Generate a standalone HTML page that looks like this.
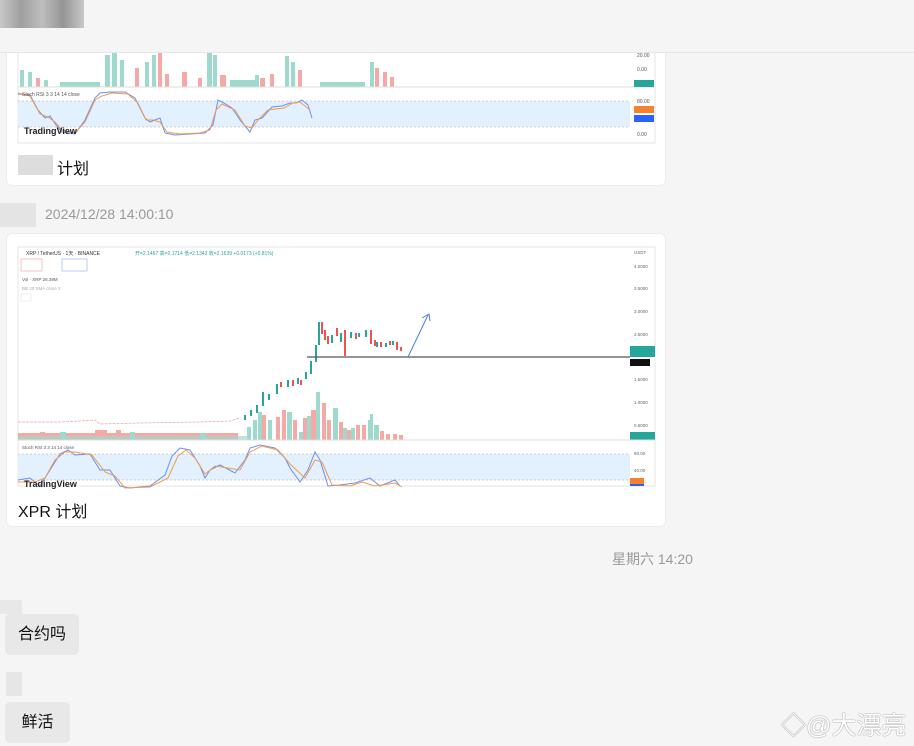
<!DOCTYPE html>
<html><head><meta charset="utf-8"><style>
body{margin:0;width:914px;height:746px;background:#f5f5f5;font-family:"Liberation Sans","Noto Sans CJK SC",sans-serif;position:relative;overflow:hidden}
.abs{position:absolute}
.card{position:absolute;background:#fff;border-radius:6px;border:1px solid #ececec}
.txt{position:absolute;font-size:16px;color:#111}
.bub{position:absolute;background:#e8e8e8;border-radius:5px;font-size:16px;color:#111;line-height:41px;text-align:center}
.blur{position:absolute;background:#ddd}
</style></head><body>
<div class="card" style="left:6px;top:20px;width:658px;height:164px"></div>
<svg class="abs" style="left:0;top:0" width="914" height="746">
<rect x="18" y="40" width="637" height="103" fill="#fff" stroke="#e5e5e5"/>
<g fill="#9fd8cc">
<rect x="20" y="70" width="4" height="17"/><rect x="28" y="72" width="4" height="15"/><rect x="44" y="80" width="4" height="7"/><rect x="105" y="55" width="5" height="32"/><rect x="112" y="50" width="5" height="37"/><rect x="120" y="60" width="4" height="27"/><rect x="145" y="62" width="4" height="25"/><rect x="152" y="55" width="4" height="32"/><rect x="207" y="52" width="5" height="35"/><rect x="213" y="55" width="4" height="32"/><rect x="255" y="75" width="4" height="12"/><rect x="285" y="56" width="4" height="31"/><rect x="291" y="62" width="4" height="25"/><rect x="370" y="62" width="4" height="25"/>
<rect x="60" y="82" width="40" height="5"/><rect x="230" y="80" width="25" height="7"/><rect x="320" y="82" width="45" height="5"/>
</g>
<g fill="#f4a9a4">
<rect x="36" y="78" width="4" height="9"/><rect x="135" y="68" width="4" height="19"/><rect x="158" y="52" width="4" height="35"/><rect x="165" y="74" width="4" height="13"/><rect x="182" y="72" width="5" height="15"/><rect x="198" y="78" width="4" height="9"/><rect x="220" y="75" width="6" height="12"/><rect x="260" y="78" width="5" height="9"/><rect x="270" y="74" width="4" height="13"/><rect x="298" y="70" width="4" height="17"/><rect x="375" y="68" width="4" height="19"/><rect x="383" y="72" width="4" height="15"/><rect x="390" y="77" width="4" height="10"/>
</g>
<line x1="18" y1="87" x2="655" y2="87" stroke="#ddd"/>
<rect x="18" y="101" width="612" height="26" fill="#e3f0fd"/>
<line x1="18" y1="101" x2="630" y2="101" stroke="#aaa" stroke-dasharray="2,2" stroke-width=".6"/>
<line x1="18" y1="127" x2="630" y2="127" stroke="#aaa" stroke-dasharray="2,2" stroke-width=".6"/>
<polyline fill="none" stroke="#6d8ff0" stroke-width="1" points="18,94 30,95 38,110 45,118 50,116 56,125 62,132 75,134 85,120 95,98 100,93 110,92 125,92 135,98 145,118 150,122 160,118 165,133 175,135 190,134 205,133 213,125 218,100 222,102 232,108 240,120 250,132 255,120 262,118 272,107 282,106 290,103 296,103 302,100 308,105 312,118"/>
<polyline fill="none" stroke="#f29a4d" stroke-width="1" points="18,93 30,96 40,114 48,117 55,122 62,130 75,133 85,122 95,100 102,96 112,93 128,94 138,103 146,120 153,120 160,122 167,132 180,134 200,133 210,130 216,110 222,104 235,110 245,126 252,128 258,120 268,110 284,108 293,103 300,102 310,110"/>
<text x="22" y="96" font-size="5" fill="#555">Stoch RSI 3 3 14 14 close</text>
<text x="24" y="134" font-size="9" font-weight="bold" fill="#222">TradingView</text>
<rect x="634" y="80" width="20" height="7" fill="#26a69a"/><rect x="634" y="106" width="20" height="7" fill="#f7812d"/><rect x="634" y="115" width="20" height="7" fill="#2962ff"/>
<text x="637" y="57" font-size="5" fill="#555">20.00</text><text x="637" y="71" font-size="5" fill="#555">0.00</text><text x="637" y="103" font-size="5" fill="#555">80.00</text><text x="637" y="136" font-size="5" fill="#555">0.00</text>
</svg>
<div class="abs" style="left:0;top:0;width:914px;height:52px;background:#f5f5f5;border-bottom:1px solid #e6e6e6"></div>
<div class="blur" style="left:0;top:0;width:84px;height:28px;background:linear-gradient(90deg,#aaa,#666,#999,#555,#aaa);opacity:.6"></div>
<div class="blur" style="left:18px;top:155px;width:35px;height:20px;background:#ddd"></div>
<div class="txt" style="left:57px;top:155px">计划</div>
<div class="blur" style="left:0;top:203px;width:36px;height:24px;background:#e4e4e4"></div>
<div class="abs" style="left:45px;top:206px;font-size:14px;color:#999">2024/12/28 14:00:10</div>
<div class="card" style="left:6px;top:233px;width:658px;height:292px"></div>
<svg class="abs" style="left:0;top:0" width="914" height="746">
<rect x="18" y="247" width="637" height="239" fill="#fff" stroke="#e5e5e5"/>
<text x="26" y="255" font-size="5" fill="#333">XRP / TetherUS · 1天 · BINANCE</text>
<text x="135" y="255" font-size="5" fill="#26a69a">开=2.1467 高=2.1714 低=2.1343 收=2.1639 +0.0173 (+0.81%)</text>
<rect x="21" y="259" width="21" height="12" fill="#fff" stroke="#f09a9a" stroke-width=".6"/><rect x="62" y="259" width="25" height="12" fill="#fff" stroke="#8aaef0" stroke-width=".6"/>
<text x="22" y="281" font-size="4.5" fill="#555">Vol · XRP 26.39M</text><text x="22" y="290" font-size="4.5" fill="#aaa">BB 20 SMA close 2</text>
<rect x="21" y="294" width="10" height="7" fill="#fff" stroke="#ddd" stroke-width=".5"/>
<g fill="#f4a9a4">
<rect x="18" y="433" width="220" height="7"/><rect x="40" y="432" width="5" height="8"/><rect x="95" y="430" width="12" height="10"/><rect x="116" y="430" width="5" height="10"/>
<rect x="262" y="415" width="4" height="25"/><rect x="276" y="417" width="4" height="23"/><rect x="282" y="410" width="4" height="30"/><rect x="293" y="420" width="4" height="20"/><rect x="303" y="418" width="4" height="22"/><rect x="311" y="410" width="5" height="30"/><rect x="322" y="403" width="4" height="37"/><rect x="327" y="420" width="4" height="20"/><rect x="339" y="422" width="4" height="18"/><rect x="347" y="430" width="5" height="10"/><rect x="356" y="425" width="4" height="15"/><rect x="362" y="425" width="4" height="15"/><rect x="380" y="431" width="4" height="9"/><rect x="386" y="434" width="4" height="6"/><rect x="393" y="434" width="4" height="6"/><rect x="399" y="435" width="4" height="5"/>
</g>
<g fill="#9fd8cc">
<rect x="18" y="436" width="230" height="4" opacity=".7"/><rect x="60" y="432" width="6" height="8"/><rect x="130" y="432" width="5" height="8"/><rect x="200" y="433" width="6" height="7"/>
<rect x="247" y="427" width="4" height="13"/><rect x="253" y="420" width="4" height="20"/><rect x="258" y="412" width="4" height="28"/><rect x="268" y="420" width="4" height="20"/><rect x="287" y="412" width="5" height="28"/><rect x="299" y="432" width="4" height="8"/><rect x="307" y="416" width="4" height="24"/><rect x="316" y="392" width="4" height="48"/><rect x="333" y="408" width="5" height="32"/><rect x="343" y="428" width="4" height="12"/><rect x="351" y="428" width="4" height="12"/><rect x="368" y="420" width="5" height="20"/><rect x="374" y="425" width="5" height="15"/><rect x="370" y="414" width="3" height="26"/>
</g>
<polyline fill="none" stroke="#f0a0a0" stroke-width=".7" stroke-dasharray="3,1" points="18,422 60,422 80,421 95,420 100,424 140,423 200,422 230,421 240,418"/>
<g fill="#26a69a">
<rect x="244" y="415" width="2" height="5"/><rect x="250" y="410" width="2" height="6"/><rect x="256" y="405" width="2" height="8"/><rect x="262" y="392" width="2" height="14"/><rect x="268" y="394" width="2" height="6"/><rect x="276" y="384" width="2" height="10"/><rect x="287" y="380" width="2" height="7"/><rect x="297" y="378" width="2" height="6"/><rect x="305" y="372" width="2" height="7"/><rect x="310" y="361" width="2" height="13"/><rect x="315" y="345" width="2" height="17"/><rect x="318" y="322" width="2" height="23"/><rect x="331" y="335" width="2" height="8"/><rect x="340" y="333" width="2" height="9"/><rect x="350" y="332" width="2" height="6"/><rect x="358" y="333" width="2" height="4"/><rect x="365" y="330" width="2" height="7"/><rect x="376" y="342" width="2" height="5"/><rect x="385" y="343" width="2" height="4"/><rect x="392" y="341" width="2" height="4"/>
</g>
<g fill="#ef5350">
<rect x="280" y="382" width="2" height="5"/><rect x="292" y="380" width="2" height="6"/><rect x="300" y="380" width="2" height="5"/><rect x="321" y="322" width="2" height="12"/><rect x="324" y="330" width="2" height="10"/><rect x="327" y="336" width="2" height="8"/><rect x="336" y="328" width="2" height="8"/><rect x="344" y="330" width="2" height="26"/><rect x="355" y="333" width="2" height="6"/><rect x="370" y="330" width="2" height="14"/><rect x="374" y="340" width="2" height="6"/><rect x="380" y="342" width="2" height="5"/><rect x="389" y="341" width="2" height="4"/><rect x="396" y="342" width="2" height="8"/><rect x="400" y="347" width="2" height="4"/>
</g>
<line x1="307" y1="357" x2="630" y2="357" stroke="#555" stroke-width="1.2"/>
<line x1="408" y1="357" x2="428" y2="315" stroke="#4a7fe8" stroke-width="1"/>
<polyline fill="none" stroke="#4a7fe8" stroke-width="1" points="422,318 429,314 430,321"/>
<rect x="630" y="346" width="25" height="11" fill="#26a69a"/><rect x="630" y="359" width="20" height="7" fill="#111"/>
<rect x="630" y="432" width="25" height="8" fill="#26a69a"/>
<g font-size="4.5" fill="#666"><text x="634" y="254">USDT</text><text x="634" y="268">4.0000</text><text x="634" y="290">3.5000</text><text x="634" y="313">3.0000</text><text x="634" y="336">2.5000</text><text x="634" y="381">1.5000</text><text x="634" y="404">1.0000</text><text x="634" y="427">0.5000</text><text x="634" y="455">80.00</text><text x="634" y="472">40.00</text></g>
<line x1="18" y1="440" x2="655" y2="440" stroke="#ddd"/>
<rect x="18" y="454" width="612" height="26" fill="#e3f0fd"/>
<line x1="18" y1="454" x2="630" y2="454" stroke="#aaa" stroke-dasharray="2,2" stroke-width=".6"/>
<line x1="18" y1="480" x2="630" y2="480" stroke="#aaa" stroke-dasharray="2,2" stroke-width=".6"/>
<polyline fill="none" stroke="#6d8ff0" stroke-width="1" points="18,480 30,478 40,486 50,470 60,454 68,450 75,455 90,454 100,470 110,470 120,486 130,488 150,486 165,475 172,456 180,448 190,450 200,466 205,478 210,470 220,465 235,473 245,460 250,448 260,445 275,448 285,458 290,468 300,482 308,470 315,452 320,460 328,486 340,485 355,483 370,478 380,486 395,480 400,486"/>
<polyline fill="none" stroke="#f29a4d" stroke-width="1" points="18,482 35,482 45,478 55,460 65,452 75,452 92,455 105,472 115,476 125,488 150,487 168,478 178,456 186,450 195,458 205,474 215,466 228,468 240,470 250,452 262,446 278,450 290,464 305,478 315,460 322,462 332,485 350,486 362,482 375,486 395,483 402,487"/>
<text x="22" y="449" font-size="4.5" fill="#555">Stoch RSI 3 3 14 14 close</text>
<text x="24" y="487" font-size="9" font-weight="bold" fill="#222">TradingView</text>
<rect x="630" y="478" width="14" height="6" fill="#f7812d"/><rect x="630" y="484" width="14" height="2" fill="#2962ff"/>
</svg>
<div class="txt" style="left:18px;top:498px">XPR 计划</div>
<div class="abs" style="left:612px;top:549px;font-size:14px;color:#999">星期六 14:20</div>
<div class="blur" style="left:0;top:600px;width:22px;height:14px;background:#e8e8e8"></div>
<div class="bub" style="left:5px;top:614px;width:74px">合约吗</div>
<div class="blur" style="left:6px;top:672px;width:16px;height:24px;background:#e6e6e6"></div>
<div class="bub" style="left:5px;top:702px;width:65px">鲜活</div>
<div class="abs" style="left:781px;top:706px;font-size:25px;color:#fff;text-shadow:0 0 1px #888,0 0 1px #888">◇@大漂亮</div>
</body></html>
